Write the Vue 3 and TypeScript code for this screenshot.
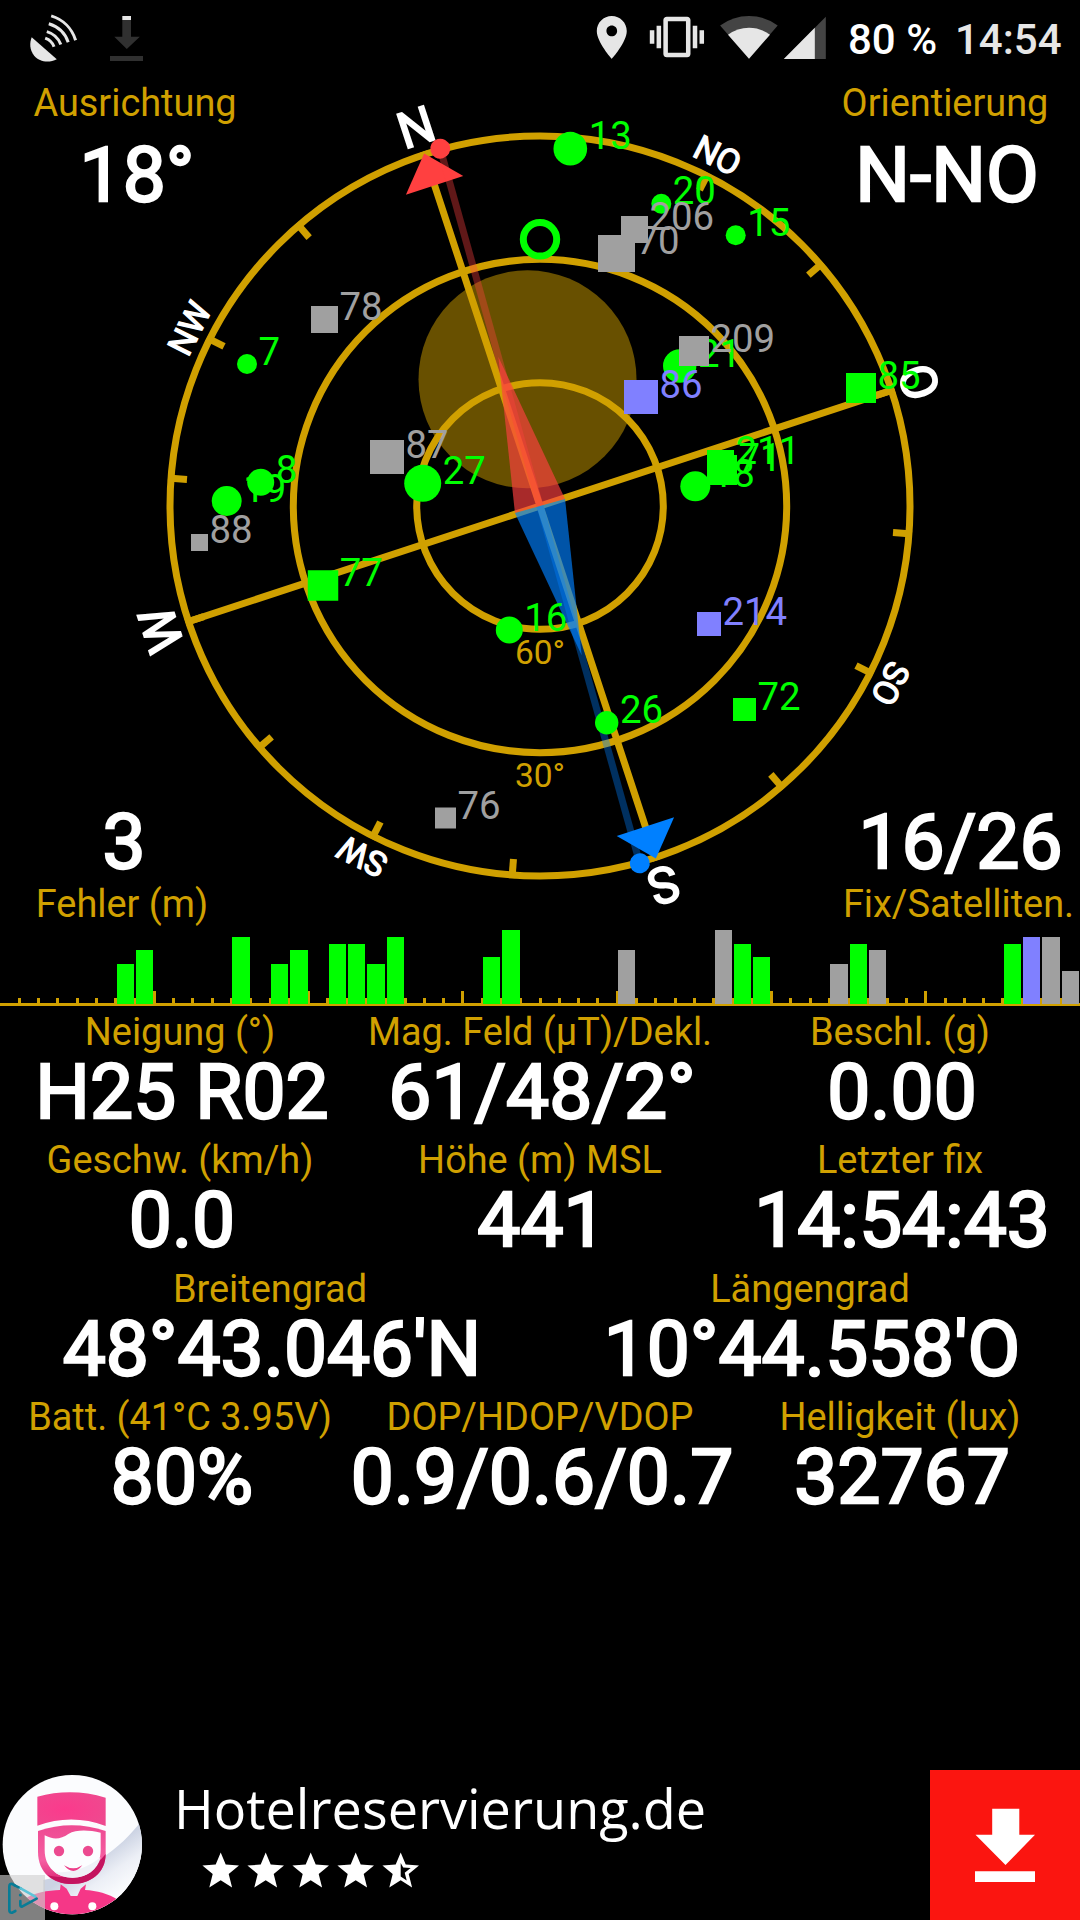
<script setup lang="ts">
type Kind = 'used' | 'idle' | 'sbas'
type Shape = 'circle' | 'square'

interface Satellite {
  id: number
  x: number
  y: number
  size: number
  shape: Shape
  kind: Kind
}

interface Reading {
  label: string
  value: string
}

const colors: Record<Kind, string> = { used: '#00ff00', idle: '#a0a0a0', sbas: '#8080ff' }

// Painted in order, so later satellites cover earlier ones.
const satellites: Satellite[] = [
  { id: 27, x: 422.7, y: 483.3, size: 37, shape: 'circle', kind: 'used' },
  { id: 26, x: 606.7, y: 722.7, size: 23.4, shape: 'circle', kind: 'used' },
  { id: 21, x: 679.7, y: 366, size: 33.4, shape: 'circle', kind: 'used' },
  { id: 20, x: 661.3, y: 203.7, size: 20, shape: 'circle', kind: 'used' },
  { id: 19, x: 226.7, y: 501, size: 30, shape: 'circle', kind: 'used' },
  { id: 18, x: 695.3, y: 486.3, size: 30, shape: 'circle', kind: 'used' },
  { id: 16, x: 509.3, y: 630, size: 27, shape: 'circle', kind: 'used' },
  { id: 15, x: 735.7, y: 235.3, size: 20, shape: 'circle', kind: 'used' },
  { id: 13, x: 570.3, y: 148.7, size: 33.7, shape: 'circle', kind: 'used' },
  { id: 8, x: 260.7, y: 482.3, size: 27, shape: 'circle', kind: 'used' },
  { id: 7, x: 247, y: 364, size: 20, shape: 'circle', kind: 'used' },
  { id: 70, x: 616.5, y: 253.5, size: 37, shape: 'square', kind: 'idle' },
  { id: 71, x: 722, y: 470, size: 30, shape: 'square', kind: 'used' },
  { id: 72, x: 744.5, y: 709.5, size: 23, shape: 'square', kind: 'used' },
  { id: 76, x: 445.5, y: 818, size: 21, shape: 'square', kind: 'idle' },
  { id: 77, x: 323, y: 585.5, size: 30.5, shape: 'square', kind: 'used' },
  { id: 78, x: 324.5, y: 319.5, size: 27, shape: 'square', kind: 'idle' },
  { id: 85, x: 861, y: 388, size: 30, shape: 'square', kind: 'used' },
  { id: 86, x: 641, y: 397, size: 34, shape: 'square', kind: 'sbas' },
  { id: 87, x: 387, y: 457, size: 34, shape: 'square', kind: 'idle' },
  { id: 88, x: 199.5, y: 542.5, size: 17, shape: 'square', kind: 'idle' },
  { id: 206, x: 634.5, y: 229.5, size: 27, shape: 'square', kind: 'idle' },
  { id: 209, x: 694, y: 351, size: 30, shape: 'square', kind: 'idle' },
  { id: 211, x: 720.5, y: 463.5, size: 27, shape: 'square', kind: 'used' },
  { id: 214, x: 709, y: 624, size: 24, shape: 'square', kind: 'sbas' },
]

const heading = 18.2
const ticks = Array.from({ length: 16 }, (_, i) => i * 22.5)
const cardinals = [
  { text: 'N', angle: 0, major: true },
  { text: 'NO', angle: 45, major: false },
  { text: 'O', angle: 90, major: true },
  { text: 'SO', angle: 135, major: false },
  { text: 'S', angle: 180, major: true },
  { text: 'SW', angle: 225, major: false },
  { text: 'W', angle: 270, major: true },
  { text: 'NW', angle: 315, major: false },
]

const slot = 1080 / 56
const slots = Array.from({ length: 55 }, (_, i) => i + 1)
const signals: [number, number, Kind][] = [
  [6, 40, 'used'], [7, 54, 'used'], [12, 67, 'used'], [14, 40, 'used'], [15, 54, 'used'],
  [17, 60, 'used'], [18, 60, 'used'], [19, 40, 'used'], [20, 67, 'used'], [25, 47, 'used'],
  [26, 74, 'used'], [32, 54, 'idle'], [37, 74, 'idle'], [38, 60, 'used'], [39, 47, 'used'],
  [43, 40, 'idle'], [44, 60, 'used'], [45, 54, 'idle'], [52, 60, 'used'], [53, 67, 'sbas'],
  [54, 67, 'idle'], [55, 33, 'idle'],
]
const bars = signals.map(([n, height, kind]) => {
  const x = Math.round(n * slot + 1)
  return { n, x, width: Math.round((n + 1) * slot - 1) - x, height, fill: colors[kind] }
})

const rows: Reading[][] = [
  [
    { label: 'Neigung (°)', value: 'H25 R02' },
    { label: 'Mag. Feld (µT)/Dekl.', value: '61/48/2°' },
    { label: 'Beschl. (g)', value: '0.00' },
  ],
  [
    { label: 'Geschw. (km/h)', value: '0.0' },
    { label: 'Höhe (m) MSL', value: '441' },
    { label: 'Letzter fix', value: '14:54:43' },
  ],
  [
    { label: 'Breitengrad', value: "48°43.046'N" },
    { label: 'Längengrad', value: "10°44.558'O" },
  ],
  [
    { label: 'Batt. (41°C 3.95V)', value: '80%' },
    { label: 'DOP/HDOP/VDOP', value: '0.9/0.6/0.7' },
    { label: 'Helligkeit (lux)', value: '32767' },
  ],
]

const star = 'M0 -18.5L5 -6.4L18.3 -5.6L8 3L11.4 16.5L0 9.2L-11.4 16.5L-8 3L-18.3 -5.6L-5 -6.4Z'
</script>

<template>
  <div class="screen">
    <header class="status">
      <svg class="status-left" width="160" height="72" viewBox="0 0 160 72">
        <path d="M31.7 37.3L56.8 59.3C49 63.2 39.5 62.2 34 55.5C29.6 50 29.4 43 31.7 37.3Z" fill="#e6e6e6" />
        <g fill="none" stroke="#e6e6e6" stroke-width="3">
          <path d="M51.2 15.9C63 19.5 72 28.5 75.6 40.2" />
          <path d="M48.8 23.7C58 26.5 65.3 33.3 68.2 42.2" />
          <path d="M46.8 31.6C53.5 33.6 58.6 38.2 60.8 44.6" />
          <path d="M45.2 38.2C49.6 39.8 52.6 42.6 54 46.8" />
        </g>
        <path d="M122.3 20H131V36.7H139.8L126.8 49L114.3 36.7H122.3ZM110 56H143V61H110Z" fill="#303030" />
        <path d="M122.3 16H131V20H122.3Z" fill="#e6e6e6" />
      </svg>
      <svg class="status-right" width="250" height="72" viewBox="590 0 250 72">
        <g fill="#e6e6e6">
          <path transform="translate(586.1 11.7) scale(2.14)" d="M12 2C8.13 2 5 5.13 5 9c0 5.25 7 13 7 13s7-7.75 7-13c0-3.87-3.13-7-7-7zm0 9.5c-1.38 0-2.5-1.12-2.5-2.5s1.12-2.5 2.5-2.5 2.5 1.12 2.5 2.5-1.12 2.5-2.5 2.5z" />
          <path transform="translate(649.8 9.9) scale(2.26)" d="M0 15h2V9H0v6zm3 2h2V7H3v10zm19-8v6h2V9h-2zm-3 8h2V7h-2v10zM16.5 3h-9C6.67 3 6 3.67 6 4.5v15c0 .83.67 1.5 1.5 1.5h9c.83 0 1.5-.67 1.5-1.5v-15c0-.83-.67-1.5-1.5-1.5zM16 19H8V5h8v14z" />
        </g>
        <path d="M749 58.7L720.1 25.5Q733 16 749 16T777.7 25.5Z" fill="#444" />
        <path d="M749 58.7L728 34.7Q737.5 27.7 749 27.7T770 34.7Z" fill="#e6e6e6" />
        <path d="M783.8 59L825.8 16.7V59Z" fill="#444" />
        <path d="M783.8 59L814.8 27.8V59Z" fill="#e6e6e6" />
      </svg>
      <span class="battery">80 %</span>
      <span class="clock">14:54</span>
    </header>

    <section class="stage">
      <svg class="compass" width="1080" height="854" viewBox="0 72 1080 854">
        <circle cx="527.5" cy="379.3" r="109" fill="#685000" />
        <g fill="none" stroke="#d0a000" stroke-width="7">
          <circle cx="540" cy="506" r="370" />
          <circle cx="540" cy="506" r="246.7" />
          <circle cx="540" cy="506" r="123.3" />
          <g :transform="`translate(540 506) rotate(${-heading})`">
            <path d="M0 -373V373M-373 0H373" />
            <path v-for="t in ticks" :key="t" d="M0 -354V-373" :transform="`rotate(${t})`" />
          </g>
        </g>
        <g class="degree">
          <text x="540" y="664">60°</text>
          <text x="540" y="787.3">30°</text>
        </g>
        <g :transform="`translate(540 506) rotate(${-heading})`">
          <text
            v-for="c in cardinals"
            :key="c.text"
            :class="c.major ? 'cardinal' : 'cardinal minor'"
            :transform="`rotate(${c.angle})`"
            x="0.5"
            y="-381"
          >{{ c.text }}</text>
          <path d="M0 -371L30.2 -337.5H-30.2Z" fill="#ff4040" />
          <path d="M0 371L30.2 337.5H-30.2Z" fill="#0080ff" />
        </g>
        <g transform="translate(540 506) rotate(-15.6)">
          <path d="M0 -155L26 0H-26Z" fill="#ff4040" fill-opacity="0.66" />
          <path d="M0 155L26 0H-26Z" fill="#0080ff" fill-opacity="0.66" />
          <path d="M0 0V-362" stroke="#ff4040" stroke-opacity="0.376" stroke-width="7" />
          <path d="M0 0V362" stroke="#0080ff" stroke-opacity="0.376" stroke-width="7" />
          <circle cx="0" cy="-371" r="10" fill="#ff4040" />
          <circle cx="0" cy="371" r="10" fill="#0080ff" />
        </g>
        <circle cx="540" cy="239.3" r="16.7" fill="none" stroke="#00ff00" stroke-width="7" />
        <g v-for="s in satellites" :key="s.id" :fill="colors[s.kind]">
          <circle v-if="s.shape === 'circle'" :cx="s.x" :cy="s.y" :r="s.size / 2" />
          <rect v-else :x="s.x - s.size / 2" :y="s.y - s.size / 2" :width="s.size" :height="s.size" />
          <text class="sat" :x="s.x + s.size / 2 + 1.5" :y="s.y + 0.6">{{ s.id }}</text>
        </g>
      </svg>
      <div class="corners top">
        <div class="corner">
          <div class="label">Ausrichtung</div>
          <div class="value">18°</div>
        </div>
        <div class="corner">
          <div class="label">Orientierung</div>
          <div class="value">N-NO</div>
        </div>
      </div>
      <div class="corners bottom">
        <div class="corner left">
          <div class="value">3</div>
          <div class="label">Fehler (m)</div>
        </div>
        <div class="corner right">
          <div class="value">16/26</div>
          <div class="label">Fix/Satelliten.</div>
        </div>
      </div>
    </section>

    <svg class="signals" width="1080" height="80" viewBox="0 0 1080 80">
      <g fill="#d0a000">
        <rect v-for="i in slots" :key="i" :x="Math.round(i * slot - 1.5)" :y="i % 8 ? 72 : 65" width="3" :height="i % 8 ? 6 : 13" />
        <rect x="0" y="77" width="1080" height="3" />
      </g>
      <rect v-for="b in bars" :key="b.n" :x="b.x" :y="78 - b.height" :width="b.width" :height="b.height" :fill="b.fill" />
    </svg>

    <section class="readings">
      <div v-for="(row, i) in rows" :key="i" class="row">
        <div v-for="r in row" :key="r.label" class="cell">
          <div class="label">{{ r.label }}</div>
          <div class="value">{{ r.value }}</div>
        </div>
      </div>
    </section>

    <footer class="banner">
      <svg class="avatar" width="150" height="150" viewBox="0 60 450 450">
        <defs>
          <clipPath id="disc"><circle cx="217" cy="284" r="209" /></clipPath>
          <radialGradient id="hat" cx="0.4" cy="0.5" r="0.7">
            <stop offset="0" stop-color="#fb3a8c" />
            <stop offset="1" stop-color="#ee4a8f" />
          </radialGradient>
          <linearGradient id="shade" x1="0.6" y1="0.3" x2="0.85" y2="0.65">
            <stop offset="0" stop-color="#ccd3e3" />
            <stop offset="0.5" stop-color="#eceff6" />
            <stop offset="1" stop-color="#fbfcfe" />
          </linearGradient>
          <linearGradient id="chin" x1="0" y1="0" x2="0" y2="1">
            <stop offset="0" stop-color="#ee4a92" />
            <stop offset="0.6" stop-color="#f55fa2" />
            <stop offset="1" stop-color="#d9206f" />
          </linearGradient>
        </defs>
        <g clip-path="url(#disc)">
          <rect x="0" y="60" width="450" height="450" fill="#fbfcfe" />
          <path d="M430 205C360 300 270 365 130 390L130 510H450Z" fill="url(#shade)" />
          <path d="M112 140Q215 112 317 143V228Q215 190 112 227Z" fill="url(#hat)" />
          <path d="M114 243Q215 208 317 243V312C317 370 270 402 216 402C160 402 114 370 114 305Z" fill="url(#chin)" />
          <path d="M317 312C317 370 270 402 216 402C185 402 160 392 142 375C210 395 275 365 317 312Z" fill="#c4145f" />
          <path d="M134 256C158 269 182 269 205 252C230 238 265 240 302 248V300C302 352 265 383 218 383C170 383 134 352 134 300Z" fill="#fcfdff" />
          <path d="M302 322C293 360 260 383 218 383C195 383 178 377 164 367C220 370 265 352 302 322Z" fill="#eff1f7" />
          <circle cx="177" cy="303" r="15.5" fill="#ec4a90" />
          <circle cx="264" cy="303" r="15.5" fill="#ec4a90" />
          <path d="M192 346Q220 364 247 346Q220 380 192 346Z" fill="#ec3f8a" />
          <path d="M75 447C100 428 145 421 180 420L182 403L200 416L212 438H232L242 416L258 403L255 420C290 422 325 431 355 450V510H75Z" fill="#f53787" />
          <circle cx="163" cy="469" r="12" fill="#fff" />
          <circle cx="277" cy="469" r="12" fill="#fff" />
        </g>
        <rect x="0" y="375" width="135" height="135" fill="#cfcfcf" fill-opacity="0.62" />
        <g fill="none" stroke-width="8" stroke-linecap="round" stroke-linejoin="round">
          <path d="M46 483L37 488Q28 490 28 480V410Q28 400 37 402L44 406" stroke="#087c96" />
          <path d="M44 406L62 415" stroke="#087c96" />
          <path d="M62 415L106 440" stroke="#5cc4d8" />
          <path d="M110 446L66 470Q61 471 61 465V453" stroke="#087c96" />
        </g>
        <circle cx="61" cy="435" r="4.5" fill="#087c96" />
      </svg>
      <div class="ad">
        <div class="ad-title">Hotelreservierung.de</div>
        <svg class="stars" width="226" height="40" viewBox="0 0 226 40">
          <path v-for="i in 4" :key="i" :d="star" :transform="`translate(${20.7 + (i - 1) * 45} 21)`" fill="#fff" />
          <g transform="translate(200.7 21)">
            <path d="M0 -18.5L5 -6.4L18.3 -5.6L8 3L11.4 16.5L0 9.2L-11.4 16.5L-8 3L-18.3 -5.6L-5 -6.4ZM0 -8V5.5L6 9.5L4 1.8L10 -3L2.5 -3.5Z" fill="#fff" fill-rule="evenodd" />
          </g>
        </svg>
      </div>
      <div class="install">
        <svg width="150" height="150" viewBox="930 1770 150 150">
          <path d="M992.2 1808.7H1019.3V1834.7H1035L1005.5 1865L975.5 1834.7H992.2ZM975 1871.3H1035V1882H975Z" fill="#fff" />
        </svg>
      </div>
    </footer>
  </div>
</template>

<style>
body {
  margin: 0;
  background: #000;
}
</style>

<style scoped>
.screen {
  width: 1080px;
  height: 1920px;
  display: flex;
  flex-direction: column;
  overflow: hidden;
  background: #000;
  font-family: Roboto, "Liberation Sans", sans-serif;
}
svg {
  display: block;
  flex: none;
}
.status {
  display: flex;
  flex: none;
  height: 72px;
  line-height: 80px;
  font-size: 42px;
  font-weight: 500;
  white-space: nowrap;
}
.status-left {
  margin-right: 430px;
}
.battery {
  width: 107px;
  padding-left: 8px;
  color: #fff;
}
.clock {
  color: #e6e6e6;
}
.stage {
  display: grid;
  flex: none;
  height: 854px;
}
.compass,
.corners {
  grid-area: 1 / 1;
}
.corners {
  display: flex;
  justify-content: space-between;
}
.top {
  align-self: start;
  padding-top: 9px;
}
.bottom {
  align-self: end;
}
.corner {
  display: flex;
  flex-direction: column;
  align-items: center;
  width: 270px;
  white-space: nowrap;
}
.top .value {
  margin-top: 12px;
}
.bottom .value {
  margin-bottom: 2px;
}
.bottom .left {
  width: 244px;
}
.bottom .right {
  width: 243px;
}
.label {
  color: #d0a000;
  font-size: 37.9px;
  line-height: 44px;
}
.value {
  padding-left: 4px;
  color: #fff;
  font-size: 76.7px;
  line-height: 76px;
  -webkit-text-stroke: 2.4px #fff;
}
.degree {
  fill: #d0a000;
  font-size: 33.5px;
  text-anchor: middle;
}
.cardinal {
  fill: #fff;
  stroke: #fff;
  stroke-width: 1.8px;
  font-size: 50px;
  text-anchor: middle;
}
.minor {
  stroke-width: 1.3px;
  font-size: 34px;
}
.sat {
  font-size: 38.35px;
}
.signals {
  shape-rendering: crispEdges;
}
.readings {
  display: flex;
  flex: none;
  flex-direction: column;
}
.row {
  display: flex;
  height: 128.33px;
}
.cell {
  display: flex;
  flex: 1 1 0;
  flex-direction: column;
  align-items: center;
  min-width: 0;
  padding-top: 4px;
  white-space: nowrap;
}
.banner {
  display: flex;
  flex: none;
  height: 150px;
  margin-top: auto;
}
.ad {
  flex: 1;
  padding-left: 24px;
}
.ad-title {
  height: 80px;
  color: #fff;
  font-family: "Open Sans", "Noto Sans", sans-serif;
  font-size: 54px;
  line-height: 77px;
  white-space: nowrap;
}
.stars {
  margin: 0 0 0 26px;
}
.install {
  width: 150px;
  background: #fb1510;
}
</style>
